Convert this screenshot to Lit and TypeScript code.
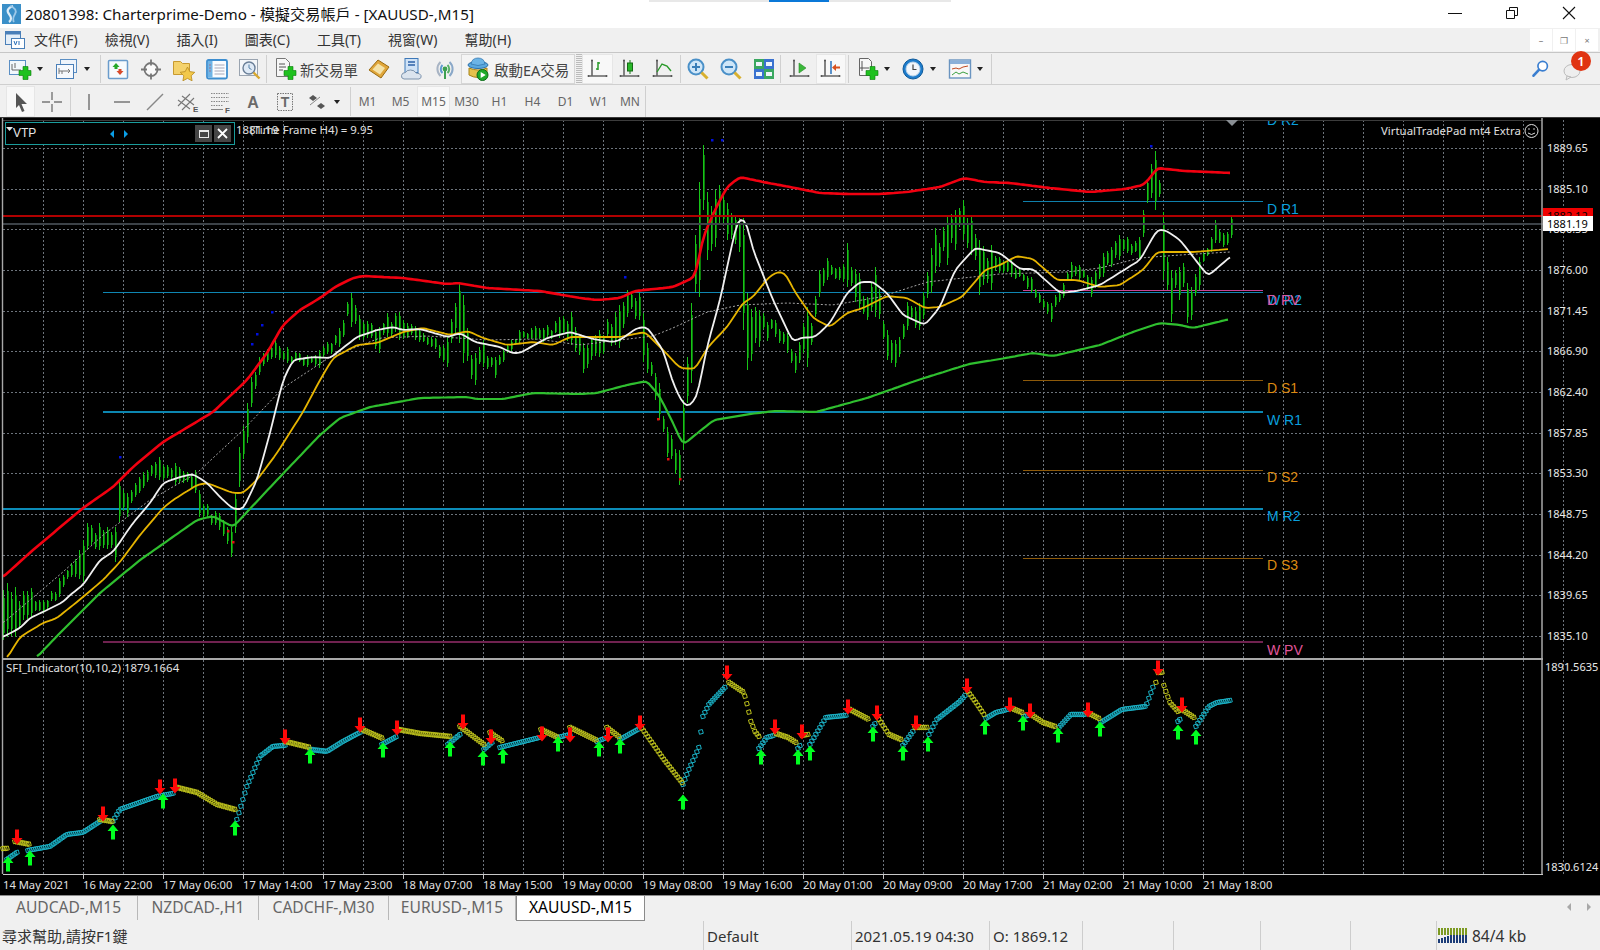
import { LitElement, html, css, svg } from "lit";
import { customElement } from "lit/decorators.js";

type P = [number, number];
type E = [number, number, number];

const RED: P[] = [[3,577],[33,550],[83,508],[113,487],[133,467],[163,442],[213,412],[247,380],[267,353],[283,325],[300,310],[320,298],[335,287],[353,278],[363,276],[403,278],[447,284],[458,283],[487,288],[540,291],[580,298],[597,300],[620,298],[635,291],[673,287],[695,277],[700,253],[703,237],[715,210],[727,187],[740,177],[763,182],[790,187],[820,193],[847,194],[880,194],[907,192],[940,187],[964,178],[985,182],[1010,183],[1050,188],[1090,192],[1125,189],[1143,185],[1150,178],[1157,168],[1185,171],[1232,173]];
const WHITE: P[] = [[3,637],[20,628],[30,618],[43,612],[63,602],[70,595],[83,585],[100,560],[113,552],[133,523],[150,503],[163,483],[180,477],[193,474],[207,483],[220,497],[233,509],[243,509],[257,480],[270,433],[283,380],[293,360],[313,357],[330,358],[357,337],[377,330],[393,327],[403,330],[420,329],[448,337],[460,333],[475,342],[500,347],[512,353],[520,353],[547,338],[570,332],[593,339],[613,342],[620,340],[637,328],[647,327],[663,350],[673,383],[682,402],[688,407],[697,397],[707,347],[720,300],[733,240],[738,220],[746,220],[752,247],[773,300],[793,342],[800,338],[815,337],[830,323],[847,293],[860,282],[873,282],[887,293],[903,315],[925,325],[940,307],[955,270],[975,248],[985,250],[1000,253],[1020,269],[1033,269],[1060,293],[1077,291],[1100,285],[1140,260],[1157,230],[1165,230],[1180,240],[1208,276],[1230,257]];
const YELLOW: P[] = [[7,658],[20,637],[43,623],[57,618],[83,597],[103,580],[120,562],[140,535],[163,508],[173,500],[197,485],[207,483],[220,488],[233,493],[243,493],[257,480],[277,453],[303,412],[320,380],[333,358],[357,345],[377,343],[403,332],[423,328],[450,335],[468,331],[483,338],[507,345],[533,342],[553,345],[570,337],[620,337],[645,332],[663,350],[680,368],[695,369],[708,347],[727,327],[743,303],[753,297],[768,278],[777,272],[785,273],[795,292],[813,318],[830,327],[847,313],[863,308],[887,296],[907,298],[925,308],[940,307],[962,297],[985,270],[1000,265],[1017,256],[1033,259],[1057,280],[1077,280],[1100,287],[1120,285],[1143,270],[1157,252],[1193,252],[1230,249]];
const GREEN: P[] = [[37,657],[60,633],[100,593],[140,560],[197,520],[213,516],[233,527],[277,480],[320,435],[340,418],[370,407],[420,398],[467,397],[477,399],[503,399],[533,393],[580,394],[597,393],[627,385],[647,381],[660,397],[673,423],[683,445],[700,431],[714,420],[750,414],[775,411],[816,412],[867,398],[918,380],[969,364],[1000,359],[1033,353],[1053,356],[1100,345],[1133,332],[1160,323],[1180,325],[1193,328],[1230,319]];
const SMA: P[] = [[3,623],[63,572],[103,535],[150,500],[197,473],[243,430],[283,388],[330,357],[380,338],[427,336],[487,340],[537,339],[580,345],[620,340],[653,336],[673,328],[707,312],[740,305],[787,303],[833,305],[880,297],[927,282],[1000,274],[1067,272],[1100,268],[1140,258],[1180,255],[1230,252]];

const ENV: E[] = [[3,590,640],[7,583,637],[13,587,637],[30,588,617],[43,600,613],[60,578,597],[70,563,577],[82,540,582],[87,523,550],[100,523,550],[113,527,562],[117,480,522],[127,493,517],[137,477,493],[157,457,480],[173,463,485],[193,470,493],[200,490,517],[217,513,530],[232,527,557],[235,493,533],[240,447,487],[245,403,443],[250,377,407],[260,357,375],[273,340,358],[287,347,363],[307,355,367],[320,350,368],[337,328,347],[350,293,327],[360,315,340],[378,327,353],[387,313,337],[400,312,340],[430,337,347],[447,337,367],[458,282,343],[463,295,363],[473,353,385],[483,340,367],[493,357,378],[502,350,362],[517,330,343],[533,326,340],[543,328,342],[560,317,338],[572,312,345],[583,343,373],[597,330,357],[620,305,348],[625,290,317],[637,293,320],[642,313,362],[648,343,373],[653,373,400],[658,383,420],[667,427,457],[680,450,485],[683,400,450],[687,357,403],[690,303,383],[698,182,297],[701,145,210],[707,192,260],[713,190,247],[720,185,223],[728,203,240],[737,218,252],[743,218,330],[747,293,370],[760,310,347],[773,320,337],[787,333,353],[793,353,373],[807,307,367],[820,270,297],[828,258,280],[840,267,280],[848,243,287],[857,273,310],[867,297,320],[875,267,317],[887,330,360],[893,340,367],[900,337,357],[907,302,330],[920,303,330],[930,248,293],[933,228,273],[937,243,267],[945,215,265],[955,210,250],[962,200,240],[970,215,255],[978,240,295],[990,245,290],[1000,257,273],[1010,260,277],[1030,277,293],[1037,293,303],[1050,303,322],[1055,295,307],[1062,283,298],[1070,262,280],[1080,265,280],[1090,277,297],[1103,253,277],[1117,235,260],[1127,237,253],[1137,237,260],[1143,210,237],[1146,180,203],[1153,151,210],[1157,180,197],[1161,212,280],[1165,257,290],[1170,270,322],[1177,267,300],[1182,263,287],[1185,283,323],[1192,287,320],[1197,257,290],[1203,253,262],[1210,237,252],[1215,220,243],[1222,233,247],[1225,232,245],[1231,216,238]];

const SFI: ["t" | "y", P[]][] = [
  ["y",[[3,849],[8,849]]],["t",[[7,860],[17,853]]],["y",[[15,842],[30,845]]],
  ["t",[[28,851],[50,847],[67,835],[83,833],[100,822]]],["y",[[100,820],[112,822]]],
  ["t",[[113,822],[120,810],[157,797],[173,794]]],["y",[[177,788],[197,793],[217,805],[235,810]]],
  ["t",[[237,820],[247,787],[260,757],[273,747],[285,746]]],["y",[[285,742],[310,748]]],
  ["t",[[310,750],[327,752],[343,742],[360,733]]],["y",[[362,730],[383,739]]],
  ["t",[[382,745],[397,737]]],["y",[[398,730],[420,734],[450,737]]],
  ["t",[[448,745],[460,735]]],["y",[[460,727],[484,745]]],["t",[[484,750],[492,743]]],
  ["y",[[490,733],[503,742]]],["t",[[500,748],[540,738]]],["y",[[541,730],[558,738]]],
  ["t",[[558,738],[570,735]]],["y",[[570,728],[597,741]]],["t",[[597,742],[607,738]]],
  ["y",[[607,728],[620,738]]],["t",[[620,740],[638,730]]],
  ["y",[[640,726],[664,760],[682,783]]],
  ["t",[[683,785],[689,770],[699,748],[703,717],[709,705],[725,688]]],
  ["y",[[729,683],[744,693],[748,708],[751,722],[755,732],[759,737]]],
  ["t",[[759,749],[767,738],[774,736]]],["y",[[776,734],[788,738],[796,743]]],
  ["t",[[798,749],[801,745]]],["y",[[802,736],[809,735]]],
  ["t",[[810,745],[826,718],[846,716]]],["y",[[850,710],[869,720]]],
  ["t",[[873,727],[876,723]]],["y",[[877,717],[889,735],[901,740]]],
  ["t",[[903,746],[913,732]]],["y",[[915,728],[927,728]]],
  ["t",[[929,735],[937,720],[960,702],[966,695]]],["y",[[968,692],[976,703],[984,715]]],
  ["t",[[986,719],[996,713],[1008,710]]],["y",[[1012,709],[1022,713]]],
  ["t",[[1024,717],[1029,716]]],["y",[[1031,715],[1043,723],[1055,727]]],
  ["t",[[1059,728],[1071,715],[1085,715]]],["y",[[1087,713],[1099,719]]],
  ["t",[[1101,723],[1122,710],[1146,707],[1154,685]]],
  ["y",[[1156,683],[1158,673],[1162,673],[1163,683],[1166,692],[1170,703],[1178,712],[1182,710],[1194,718]]],
  ["t",[[1178,722],[1180,720]]],["t",[[1196,727],[1209,707],[1217,703],[1231,701]]],
];
const UPS: P[] = [[8,864],[30,858],[113,832],[163,801],[235,828],[310,756],[383,750],[450,749],[483,758],[503,756],[558,744],[599,749],[620,746],[683,802],[761,757],[798,757],[810,753],[873,734],[903,753],[928,744],[985,727],[1023,723],[1058,735],[1100,729],[1178,732],[1196,737]];
const DOWNS: P[] = [[17,837],[103,814],[160,787],[175,786],[285,737],[360,725],[397,728],[463,722],[491,737],[542,734],[570,735],[608,735],[640,723],[727,673],[775,727],[802,732],[848,707],[877,713],[916,723],[967,686],[1010,705],[1030,711],[1088,710],[1158,668],[1182,705]];

const PRICES = ["1889.65","1885.10","1880.55","1876.00","1871.45","1866.90","1862.40","1857.85","1853.30","1848.75","1844.20","1839.65","1835.10"];
const TIMES: [number,string][] = [[3,"14 May 2021"],[83,"16 May 22:00"],[163,"17 May 06:00"],[243,"17 May 14:00"],[323,"17 May 23:00"],[403,"18 May 07:00"],[483,"18 May 15:00"],[563,"19 May 00:00"],[643,"19 May 08:00"],[723,"19 May 16:00"],[803,"20 May 01:00"],[883,"20 May 09:00"],[963,"20 May 17:00"],[1043,"21 May 02:00"],[1123,"21 May 10:00"],[1203,"21 May 18:00"]];
const BLUE_DOTS: P[] = [[712,140],[722,140],[120,457],[252,344],[257,334],[262,325],[272,312],[625,277],[1151,146]];
const RED_DOTS: P[] = [[228,531],[233,542],[658,419],[668,459],[680,479]];

const lerp = (pts: P[], x: number) => {
  for (let i = 1; i < pts.length; i++) {
    if (x <= pts[i][0]) {
      const [a, b] = [pts[i - 1], pts[i]];
      return a[1] + ((b[1] - a[1]) * (x - a[0])) / Math.max(b[0] - a[0], 0.001);
    }
  }
  return pts[pts.length - 1][1];
};
const curve = (pts: P[]) => {
  const x0 = pts[0][0], x1 = pts[pts.length - 1][0];
  const out: P[] = [];
  for (let x = x0; x <= x1; x += 3) out.push([x, lerp(pts, x)]);
  return out
    .map((p, i) => {
      const a = out[Math.max(i - 1, 0)], b = out[Math.min(i + 1, out.length - 1)];
      return `${i ? "L" : "M"}${p[0]} ${((a[1] + 2 * p[1] + b[1]) / 4).toFixed(1)}`;
    })
    .join("");
};
const candles = () => {
  let s = 4242;
  const rnd = () => (s = (s * 16807) % 2147483647) / 2147483647;
  const hi: P[] = ENV.map((e) => [e[0], e[1]]);
  const lo: P[] = ENV.map((e) => [e[0], e[2]]);
  const bars = new Map<number, [number, number]>();
  const step = 4;
  for (let x = 3; x <= 1231; x += step) {
    const h = lerp(hi, x), l = lerp(lo, x), span = l - h;
    const len = span * (0.45 + 0.4 * rnd());
    const t = h + (span - len) * rnd();
    bars.set(x, [t, t + len]);
  }
  for (const e of ENV) {
    const x = 3 + Math.min(Math.round((e[0] - 3) / step), 307) * step;
    bars.set(x, [e[1], e[2]]);
  }
  let wick = "", body = "";
  bars.forEach((v, x) => {
    const len = v[1] - v[0];
    wick += `M${x + 0.5} ${v[0].toFixed(0)}V${v[1].toFixed(0)}`;
    body += `M${x + 1.5} ${(v[0] + len * 0.15).toFixed(0)}V${(v[1] - len * 0.15).toFixed(0)}`;
  });
  return { wick, body };
};
const chain = (c: "t" | "y") =>
  SFI.filter((s) => s[0] === c)
    .map((s) => {
      let d = "";
      const x0 = s[1][0][0], x1 = s[1][s[1].length - 1][0];
      for (let x = x0; x <= x1 + 0.1; x += 2) {
        const y = lerp(s[1], x);
        d += `M${(x - 2.5).toFixed(1)} ${(y - 2).toFixed(1)}l3.8 -1l1 3.8l-3.8 1z`;
      }
      return d;
    })
    .join("");
const upArrow = (p: P) => `M${p[0]} ${p[1] - 7.5}l5.5 6.5h-3.500v8.500h-4v-8.500h-3.500z`;
const downArrow = (p: P) => `M${p[0]} ${p[1] + 7.5}l5.5 -6.500h-3.500v-8.500h-4v8.500h-3.500z`;

@customElement("mt-chart")
class MtChart extends LitElement {
  static styles = css`
    :host { display: block; height: 779px; background: #000; }
    svg { display: block; }
    .pr { font: 11px "Noto Sans", sans-serif; fill: #e8e8e8; }
    .tm { font: 11.2px "Noto Sans", sans-serif; fill: #e2e2e2; }
    .ink { font: 11px "Noto Sans", sans-serif; fill: #000; }
    .lv { font: 14px "Liberation Sans", sans-serif; }
    .note { font: 11.4px "Noto Sans", sans-serif; fill: #e0e0e0; }
    .vtp { font: 12px "Liberation Sans", sans-serif; fill: #e8e8e8; }
    .c { fill: none; }
    .cr { shape-rendering: crispEdges; }
  `;
  render() {
    const hg = PRICES.map((_, i) => 148 + 40.67 * i);
    const vg = Array.from({ length: 39 }, (_, i) => 43 + 40 * i);
    const { wick, body } = candles();
    const lines: [number, number, number, string, number][] = [
      [1023, 1263, 201, "#0f80ac", 1],
      [1023, 1263, 380, "#8e5a0a", 1],
      [1023, 1263, 470, "#8e5a0a", 1],
      [1023, 1263, 558, "#8e5a0a", 1],
      [103, 1263, 292, "#0f86b2", 1],
      [1023, 1263, 290, "#c84496", 1],
      [103, 1263, 412, "#0c86b0", 1.4],
      [3, 1263, 509, "#0c8cb8", 2],
      [103, 1263, 642, "#702250", 1.4],
    ];
    const labels: [number, string, string][] = [
      [125, "D R2", "#0a9fdc"], [214, "D R1", "#0a9fdc"], [393, "D S1", "#dc8a12"], [482, "D S2", "#dc8a12"], [570, "D S3", "#dc8a12"],
      [305, "W R2", "#0a9fdc"], [305, "D PV", "#e0559a"], [425, "W R1", "#0a9fdc"], [521, "M R2", "#0a9fdc"], [655, "W PV", "#e0559a"],
    ];
    return html`<svg width="1600" height="779" viewBox="0 117 1600 779">
      <rect x="0" y="117" width="1600" height="779" fill="#000"></rect>
      <g class="cr" stroke="#6d747c" stroke-dasharray="2 2" fill="none">
        ${hg.map((y) => svg`<path d="M3 ${Math.round(y) + 0.5}H1542"></path>`)}
        ${vg.map((x) => svg`<path d="M${x + 0.5} 120V658M${x + 0.5} 660V874"></path>`)}
      </g>
      ${lines.map((l) => svg`<path class="cr" d="M${l[0]} ${l[2]}H${l[1]}" stroke=${l[3]} stroke-width=${l[4]}></path>`)}
      <path class="cr c" d=${body} stroke="#0a7e0a"></path>
      <path class="cr c" d=${wick} stroke="#18c418"></path>
      <path class="c" d=${curve(SMA)} stroke="#a6a6a6" stroke-dasharray="2 2"></path>
      <path class="c" d=${curve(GREEN)} stroke="#2fbf2f" stroke-width="2.2" stroke-linejoin="round"></path>
      <path class="c" d=${curve(YELLOW)} stroke="#e6b400" stroke-width="1.8" stroke-linejoin="round"></path>
      <path class="c" d=${curve(WHITE)} stroke="#f0f0f0" stroke-width="1.8" stroke-linejoin="round"></path>
      <path class="c" d=${curve(RED)} stroke="#f20010" stroke-width="2.6" stroke-linejoin="round"></path>
      <path class="cr" d="M3 216H1543" stroke="#b00000" stroke-width="2"></path>
      <path class="cr" d="M3 224H1543" stroke="#3c4248" stroke-width="2"></path>
      ${BLUE_DOTS.map((p) => svg`<rect x=${p[0] - 1} y=${p[1] - 1} width="2.5" height="2.5" fill="#0010e0"></rect>`)}
      ${RED_DOTS.map((p) => svg`<rect x=${p[0] - 1} y=${p[1] - 1} width="2.5" height="2.5" fill="#e01010"></rect>`)}
      ${labels.map((l) => svg`<text class="lv" x="1267" y=${l[0]} fill=${l[2]}>${l[1]}</text>`)}

      <rect x="0" y="117" width="1600" height="3" fill="#000"></rect>
      <path d="M0 117.5H1600" stroke="#3a3a3a"></path>
      <path d="M3 120.5H1542" stroke="#3c3c3c"></path>
      <path d="M1226 120h12l-6 6z" fill="#8a8f94"></path>

      <path d="M2.5 118V874" stroke="#a8a8a8" stroke-width="1.4"></path>
      <path d="M3 659H1543" stroke="#a8a8a8" stroke-width="2"></path>
      <path d="M1542 118V875" stroke="#a8a8a8" stroke-width="1.5"></path>
      <path d="M3 874.5H1543" stroke="#c8c8c8"></path>
      ${TIMES.slice(1).map((t) => svg`<path d="M${t[0] + 0.5} 874V879" stroke="#c8c8c8"></path>`)}
      ${TIMES.map((t) => svg`<text class="tm" x=${t[0]} y="889">${t[1]}</text>`)}
      <path d="M0 895.5H1600" stroke="#8c8c8c"></path>

      <path class="c" d=${chain("t")} stroke="#1ab0c4"></path>
      <path class="c" d=${chain("y")} stroke="#bcc01c"></path>
      <path d=${UPS.map(upArrow).join("")} fill="#00ff20"></path>
      <path d=${DOWNS.map(downArrow).join("")} fill="#ff0808"></path>
      <text class="note" x="6" y="672">SFI_Indicator(10,10,2) 1879.1664</text>

      ${PRICES.map((p, i) => svg`<text class="pr" x="1547" y=${hg[i] + 4}>${p}</text>`)}
      <rect x="1543" y="208" width="50" height="16" fill="#f00000"></rect>
      <text class="ink" x="1547" y="220">1882.12</text>
      <rect x="1543" y="216" width="50" height="15" fill="#fff"></rect>
      <text class="ink" x="1547" y="228">1881.19</text>
      <text class="pr" x="1545" y="671">1891.5635</text>
      <text class="pr" x="1545" y="871">1830.6124</text>

      <rect x="5.5" y="122.5" width="229" height="22" fill="#000" stroke="#1a9c9c"></rect>
      <path d="M6 127h7l-3.500 4z" fill="#e8e8e8"></path>
      <text class="vtp" x="13" y="137">VTP</text>
      <path d="M114 130v8l-4-4zM124 130v8l4-4z" fill="#0a9fe8"></path>
      <rect x="195" y="125" width="17" height="17" fill="#454545"></rect>
      <rect x="214" y="125" width="17" height="17" fill="#454545"></rect>
      <rect x="199.500" y="130.500" width="9" height="7" fill="none" stroke="#e8e8e8"></rect>
      <path d="M199.500 131.500h9" stroke="#e8e8e8"></path>
      <path d="M218 129l9 9M227 129l-9 9" stroke="#fff" stroke-width="1.800"></path>
      <text class="note" x="236" y="134">1881.19</text>
      <text class="note" x="250" y="134">(Time Frame H4) = 9.95</text>
      <text class="note" x="1381" y="135">VirtualTradePad mt4 Extra</text>
      <circle cx="1531.500" cy="131" r="6.500" fill="none" stroke="#e0e0e0"></circle>
      <path d="M1528 133q3.500 3 7 0" fill="none" stroke="#e0e0e0"></path>
      <circle cx="1529" cy="129" r=".8" fill="#e0e0e0"></circle>
      <circle cx="1534" cy="129" r=".8" fill="#e0e0e0"></circle>
    </svg>`;
  }
}

const axes = svg`<path d="M6 3v16M2 19h19" stroke="#666" stroke-width="1.600" fill="none"></path><circle cx="2.500" cy="19" r="1" fill="#555"></circle><circle cx="20.500" cy="19" r="1" fill="#555"></circle><circle cx="6" cy="3.500" r="1" fill="#555"></circle>`;
const greenPlus = svg`<path d="M12 12.500h4v-4h5v4h3v5h-3v4h-5v-4h-4z" transform="translate(-1 1)" fill="#1fc11f" stroke="#0a7a0a" stroke-width=".6"></path>`;

const icons: Record<string, unknown> = {
  newChart: svg`<rect x="1.500" y="3.500" width="16" height="14" fill="#f2f7fc" stroke="#5b8fc4"></rect><path d="M4 7v6M4 13h9M7 6v5" stroke="#666" fill="none"></path>${greenPlus}`,
  profile: svg`<rect x="5.500" y="2.500" width="16" height="13" fill="#eef4fb" stroke="#5b8fc4"></rect><rect x="1.500" y="7.500" width="17" height="14" fill="#f6f9fd" stroke="#4a7fb8"></rect><path d="M4 11v6M4 14h11M7 17v-3M13 12l2 2-2 2" stroke="#777" fill="none"></path>`,
  market: svg`<rect x="2.500" y="3.500" width="19" height="18" rx="1" fill="#f7fafd" stroke="#6a9ccc" stroke-width="1.500"></rect><path d="M10 6l3.500 4h-2v2h-3v-2h-2z" fill="#28a828"></path><path d="M14 18l-3.500-4h2v-2h3v2h2z" fill="#d84a2a"></path>`,
  crosshair: svg`<circle cx="12" cy="12.500" r="6.500" fill="#fafafa" stroke="#777" stroke-width="1.800"></circle><path d="M12 2.500v6M12 16.500v6M2 12.500h6M16 12.500h6" stroke="#777" stroke-width="1.800"></path>`,
  folder: svg`<path d="M1.500 4.500h7l2 2h7v11h-16z" fill="#f4d26c" stroke="#c89a30"></path><path d="M15.500 10l2.300 4.600 5 .7-3.600 3.500.9 5-4.600-2.400-4.600 2.400.9-5-3.600-3.500 5-.7z" fill="#f2c84a" stroke="#b88a20" stroke-width=".8"></path>`,
  terminal: svg`<rect x="2" y="3" width="20" height="18.500" rx="1.500" fill="#fafcff" stroke="#3d8ed0" stroke-width="1.800"></rect><rect x="3" y="4" width="4.500" height="16.500" fill="#6fb4e6"></rect><path d="M9.500 8h10M9.500 11h10M9.500 14h10M9.500 17h10" stroke="#a8a8b8"></path><path d="M5 7.500v1M5 10.500v1M5 13.500v1" stroke="#d03030"></path>`,
  tester: svg`<rect x="1.500" y="2.500" width="18" height="16" fill="#f4f6f9" stroke="#9aa4b0"></rect><circle cx="11" cy="11" r="6" fill="#dfeaf6" stroke="#6a7f98" stroke-width="1.400"></circle><path d="M11 7.500V11l2.500 1.500" stroke="#5580a8" fill="none"></path><path d="M15.500 15.500l6 6" stroke="#d8a830" stroke-width="2.400"></path>`,
  order: svg`<path d="M3.500 1.500h9l4 4v14h-13z" fill="#f7f7f7" stroke="#777"></path><path d="M6 7h6M6 10h7M6 13h4" stroke="#555"></path>${greenPlus}`,
  gold: svg`<path d="M2 13l9-10 11 7-8 11z" fill="#e0a63a" stroke="#9a6a10"></path><path d="M5.500 12.500l5.500-6 7 4.500-5 6.500z" fill="#f4e2a8"></path>`,
  editor: svg`<rect x="5" y="1.500" width="13" height="14" fill="#cfe2f6" stroke="#3d78b8"></rect><path d="M8 5h7M8 8h7" stroke="#2c62a8" stroke-width="1.400"></path><path d="M4 22q-3-.5-2.500-3.500t4-3q1-2.500 5-2.500t5.500 3q4 0 5 2.500t-2 3.500z" fill="#dbe4ee" stroke="#7d93ac"></path>`,
  signal: svg`<path d="M7.500 19a9.500 9.500 0 0 1 0-14" fill="none" stroke="#a8b4c4" stroke-width="2"></path><path d="M16.500 5a9.500 9.500 0 0 1 0 14" fill="none" stroke="#8aa8c8" stroke-width="2"></path><path d="M9.500 16a5.500 5.500 0 0 1 0-8" fill="none" stroke="#5e9ad0" stroke-width="2"></path><path d="M14.500 8a5.500 5.500 0 0 1 0 8" fill="none" stroke="#58b068" stroke-width="2"></path><circle cx="12" cy="12" r="2.400" fill="#3da050"></circle><path d="M12 14v8" stroke="#3da050" stroke-width="2"></path>`,
  ea: svg`<ellipse cx="12" cy="8" rx="10" ry="3.500" fill="#5aa8de" stroke="#2a70aa"></ellipse><path d="M5 7q1-6 7-6t7 6q-7 3-14 0z" fill="#6cb4e6" stroke="#2a70aa" stroke-width=".7"></path><path d="M3 11q9 4 18 0v7q-9 5-18 0z" fill="#e6c24c" stroke="#a88418"></path><circle cx="16.500" cy="18" r="5.500" fill="#1eaa2a" stroke="#0d6a18"></circle><path d="M14.700 15l5 3-5 3z" fill="#fff"></path>`,
  bars: svg`${axes}<path d="M12 5v8M10 12h2M12 6h2" stroke="#2a9a2a" stroke-width="1.500" fill="none"></path>`,
  candle: svg`${axes}<path d="M12 3v14" stroke="#1a7a1a"></path><rect x="9.500" y="6" width="5" height="8" fill="#2ab82a" stroke="#156a15"></rect>`,
  line: svg`${axes}<path d="M6 15l5-8 5 2 4 5" stroke="#2a9a2a" stroke-width="1.400" fill="none"></path>`,
  zoomIn: svg`<circle cx="10" cy="10" r="7.500" fill="#cfe6f8" stroke="#4a90c8" stroke-width="2"></circle><path d="M6 10h8M10 6v8" stroke="#3a7eb8" stroke-width="2"></path><path d="M15.500 15.500l6 6" stroke="#d8b030" stroke-width="3"></path>`,
  zoomOut: svg`<circle cx="10" cy="10" r="7.500" fill="#cfe6f8" stroke="#4a90c8" stroke-width="2"></circle><path d="M6 10h8" stroke="#3a7eb8" stroke-width="2"></path><path d="M15.500 15.500l6 6" stroke="#d8b030" stroke-width="3"></path>`,
  tile: svg`<rect x="2" y="2" width="10" height="10" fill="#3aa860"></rect><rect x="12" y="2" width="10" height="10" fill="#3a72d0"></rect><rect x="2" y="12" width="10" height="10" fill="#3a72d0"></rect><rect x="12" y="12" width="10" height="10" fill="#3aa860"></rect><path d="M4 5h6v4H4zM14 5h6v4h-6zM4 15h6v4H4zM14 15h6v4h-6z" fill="#eef5fb"></path>`,
  scroll: svg`${axes}<path d="M11 6l7 5-7 5z" fill="#3ab83a" stroke="#2a8a2a" stroke-width=".6"></path>`,
  shift: svg`${axes}<path d="M12 4v13" stroke="#4a86c4" stroke-width="1.800"></path><path d="M21 9.500h-4v-2.500l-4 3.500 4 3.500v-2.500h4z" fill="#d8501c"></path>`,
  indic: svg`<path d="M4.500 1.500h9l3 3v14h-12z" fill="#f7f7f7" stroke="#666"></path><path d="M7 4v10M5 11h9" stroke="#555" fill="none"></path>${greenPlus}`,
  clock: svg`<circle cx="12" cy="12" r="10" fill="#1d7ccc" stroke="#0f5a9a"></circle><circle cx="12" cy="12" r="7" fill="#f2f6fb" stroke="#bcd4ea"></circle><path d="M12 7.500V12.500h3.500" stroke="#444" stroke-width="1.200" fill="none"></path>`,
  tmpl: svg`<rect x="1.500" y="3" width="21" height="18" fill="#f8f8f8" stroke="#6a94c0" stroke-width="1.400"></rect><rect x="2" y="3.500" width="20" height="3.500" fill="#8ab0d8"></rect><path d="M4 12l4-1 3 1 4-2 5-1" stroke="#c04a20" fill="none"></path><path d="M4 18l4-3 3 2 4-2 5 2" stroke="#3aa040" fill="none"></path>`,
  cursor: svg`<path d="M7 3l11 11h-5.500l3 7-2.500 1-3-7-3 3z" fill="#555"></path>`,
  cross: svg`<path d="M12 2v8M12 14v8M2 12h8M14 12h8" stroke="#777" stroke-width="1.400"></path>`,
  vline: svg`<path d="M12 4v16" stroke="#777" stroke-width="1.500"></path>`,
  hline: svg`<path d="M4 12h16" stroke="#777" stroke-width="1.500"></path>`,
  trend: svg`<path d="M4 20L20 4" stroke="#888" stroke-width="1.500"></path>`,
  chan: svg`<path d="M2 16L14 4M6 20L18 8M2 10l12 9M6 6l12 9" stroke="#777" stroke-width="1.100" fill="none"></path><text x="17" y="22" font-family="Liberation Sans" font-size="8" font-weight="700" fill="#555">E</text>`,
  fib: svg`<path d="M2 3.500h18M2 7.500h18M2 11.500h18M2 15.500h12" stroke="#888" stroke-dasharray="1.500 1"></path><path d="M2 19.500h12" stroke="#888"></path><text x="16" y="23" font-family="Liberation Sans" font-size="8" font-weight="700" fill="#555">F</text>`,
  textA: svg`<text x="12" y="18" text-anchor="middle" font-family="Liberation Sans" font-size="16" font-weight="700" fill="#6a6a6a">A</text>`,
  textT: svg`<rect x="4.500" y="3.500" width="15" height="17" fill="none" stroke="#777" stroke-dasharray="1.500 1"></rect><text x="12" y="17" text-anchor="middle" font-family="Liberation Sans" font-size="14" font-weight="700" fill="#6a6a6a">T</text>`,
  arrows: svg`<path d="M8 5l4 3-4 3-4-3z" fill="#555"></path><path d="M16 13l4 3-4 3-4-3z" fill="#555"></path><path d="M5 15l10-8" stroke="#888"></path>`,
  search: svg`<circle cx="14" cy="8.500" r="5.700" fill="#fff" stroke="#3a7ed0" stroke-width="2"></circle><path d="M9.500 13l-6.500 7" stroke="#3a7ed0" stroke-width="3.200" stroke-linecap="round"></path>`,
};
const ic = (n: string) => html`<svg class="ic" viewBox="0 0 24 24">${icons[n]}</svg>`;

type Item =
  | { w: number }
  | { sep: true }
  | { b: string; w?: number; on?: boolean }
  | { dd: string }
  | { tf: string; w?: number; on?: boolean };

const TB1: Item[] = [
  { w: 5 }, { dd: "newChart" }, { w: 7 }, { dd: "profile" }, { w: 8 }, { sep: true },
  { b: "market" }, { b: "crosshair" }, { b: "folder" }, { b: "terminal" }, { b: "tester" }, { sep: true },
];
const TB1B: Item[] = [{ b: "gold" }, { b: "editor" }, { b: "signal" }];
const TB1C: Item[] = [
  { b: "bars", w: 31, on: true }, { b: "candle" }, { b: "line" }, { w: 1 }, { sep: true },
  { b: "zoomIn" }, { b: "zoomOut" }, { b: "tile" }, { sep: true }, { w: 2 }, { b: "scroll" }, { b: "shift", w: 30, on: true },
  { w: 2 }, { sep: true }, { w: 3 }, { dd: "indic" }, { w: 6 }, { dd: "clock" }, { w: 7 }, { dd: "tmpl" },
];
const TB2: Item[] = [
  { w: 6 }, { b: "cursor", w: 29, on: true }, { b: "cross" }, { w: 2 }, { sep: true }, { w: 1 },
  { b: "vline" }, { b: "hline" }, { b: "trend" }, { b: "chan" }, { b: "fib" }, { b: "textA", w: 31 }, { b: "textT" }, { w: 1 },
  { dd: "arrows" }, { w: 8 }, { sep: true },
  { tf: "M1" }, { tf: "M5" }, { tf: "M15", on: true }, { tf: "M30" }, { tf: "H1" }, { tf: "H4" }, { tf: "D1" }, { tf: "W1" }, { tf: "MN", w: 30 },
];
const MENU = ["文件(F)", "檢視(V)", "插入(I)", "圖表(C)", "工具(T)", "視窗(W)", "幫助(H)"];
const TABS: [string, number][] = [["AUDCAD-,M15", 138], ["NZDCAD-,H1", 121], ["CADCHF-,M30", 130], ["EURUSD-,M15", 127]];
const STATUS: [string, number][] = [["Default", 148], ["2021.05.19 04:30", 138], ["O: 1869.12", 93], ["", 91], ["", 87], ["", 90], ["", 86]];

@customElement("app-root")
export class AppRoot extends LitElement {
  static styles = css`
    :host {
      display: block; position: relative; width: 1600px; height: 950px; overflow: hidden;
      font-family: "Noto Sans", "Noto Sans CJK TC", sans-serif; color: #222; background: #f0f0f0;
    }
    .ic { width: 24px; height: 24px; display: block; flex: none; }
    .title { height: 28px; box-sizing: border-box; padding-bottom: 3px; background: #fff; display: flex; align-items: center; position: relative; font-size: 15.2px; color: #111; white-space: nowrap; }
    .logo { width: 19px; height: 20px; margin: 3px 4px 0 2px; display: block; }
    .strip { position: absolute; left: 649px; top: 0; width: 302px; height: 1.5px; background: #e8e8e8; }
    .strip i { position: absolute; left: 120px; width: 60px; height: 1.5px; background: #0a78d8; }
    .win { margin-left: auto; display: flex; padding-right: 24px; gap: 43px; align-items: center; }
    .win svg { width: 14px; height: 14px; display: block; }
    .menu { height: 24px; box-sizing: border-box; padding-bottom: 2px; display: flex; align-items: center; font-size: 14px; color: #333; }
    .mico { width: 22px; height: 22px; margin: 2px 8px 0 4px; display: block; flex: none; }
    .mitems { display: flex; gap: 27px; }
    .mdi { margin-left: auto; display: flex; gap: 1px; padding-right: 2px; margin-top: 2px; }
    .mdi span { width: 22px; height: 22px; background: #fff; display: flex; align-items: center; justify-content: center; font-size: 9px; color: #777; }
    .row { display: flex; align-items: center; box-sizing: border-box; }
    .r1 { height: 33px; border-top: 1px solid #c6c6c6; border-bottom: 1px solid #cfcfcf; padding-top: 1px; }
    .r2 { height: 32px; padding-top: 1px; }
    .grp { display: flex; align-items: stretch; height: 100%; flex: none; }
    .g1 { width: 992px; border-right: 1px solid #cfcfcf; box-sizing: border-box; }
    .g2 { width: 646px; border-right: 1px solid #cfcfcf; box-sizing: border-box; }
    .sp { display: block; flex: none; }
    .sep { width: 1px; flex: none; background: #d0d0d0; margin: 1px 0; }
    .b { display: flex; align-items: center; justify-content: center; flex: none; box-sizing: border-box; }
    .on { background: #f8f8f8; box-shadow: inset 0 0 0 1px #e6e6e6; }
    .dd { display: flex; align-items: center; flex: none; }
    .dd .slot { width: 30px; display: flex; justify-content: center; }
    .dd .car { width: 10px; display: flex; justify-content: center; }
    .car i { display: block; border-left: 3.5px solid transparent; border-right: 3.5px solid transparent; border-top: 4px solid #222; }
    .wide { width: 95px; display: flex; align-items: center; padding-left: 6px; box-sizing: border-box; gap: 3px; font-size: 14.5px; color: #444; flex: none; }
    .box { width: 114px; display: flex; align-items: center; padding-left: 4px; gap: 4px; box-sizing: border-box; font-size: 14.5px; color: #444; flex: none; border: 1px solid #d6d6d6; background: #f4f4f4; white-space: nowrap; }
    .grip { width: 6px; flex: none; margin-left: 1px; background: repeating-linear-gradient(180deg, #bbb 0 1px, transparent 1px 2px); }
    .tf { font-size: 12px; color: #666; display: flex; align-items: center; justify-content: center; flex: none; }
    .right { margin-left: auto; display: flex; align-items: center; padding-right: 15px; gap: 12px; position: relative; }
    .right .ic { width: 20px; height: 20px; }
    .bub { width: 22px; height: 18px; position: relative; margin-top: 6px; }
    .bub svg { display: block; width: 22px; height: 18px; }
    .badge { position: absolute; right: -6px; top: -12px; width: 20px; height: 20px; border-radius: 50%; background: #e03412; color: #fff; font-size: 13px; font-weight: 600; display: flex; align-items: center; justify-content: center; }
    .tabs { height: 25px; display: flex; font-size: 15.6px; color: #666; box-sizing: border-box; }
    .tab { display: flex; align-items: center; justify-content: center; box-sizing: border-box; border-right: 1px solid #b8b8b8; height: 24px; padding-bottom: 3px; flex: none; }
    .tab.cur { background: #fff; color: #000; border: 1px solid #8a8a8a; border-top: none; width: 129px; height: 25px; }
    .tarr { margin-left: auto; display: flex; gap: 16px; align-items: center; padding-right: 9px; padding-bottom: 4px; }
    .tarr i { display: block; width: 0; height: 0; border-top: 4px solid transparent; border-bottom: 4px solid transparent; }
    .tarr .l { border-right: 4px solid #a8a8a8; }
    .tarr .r { border-left: 4px solid #a8a8a8; }
    .status { height: 29px; display: flex; font-size: 15px; color: #333; }
    .cell { box-sizing: border-box; border-left: 1px solid #cdcdcd; padding-left: 3px; display: flex; align-items: center; flex: none; white-space: nowrap; }
    .first { width: 703px; border-left: none; padding-left: 2px; }
    .net { padding-left: 1px; gap: 4px; width: 164px; font-size: 15.5px; }
    .net svg { display: block; width: 30px; height: 17px; }
  `;

  private item(it: Item) {
    if ("sep" in it) return html`<span class="sep"></span>`;
    if ("dd" in it)
      return html`<span class="dd"><span class="slot">${ic(it.dd)}</span><span class="car"><i></i></span></span>`;
    if ("b" in it)
      return html`<span class="b ${it.on ? "on" : ""}" style="width:${it.w ?? 33}px">${ic(it.b)}</span>`;
    if ("tf" in it)
      return html`<span class="tf ${it.on ? "on" : ""}" style="width:${it.w ?? 33}px">${it.tf}</span>`;
    return html`<span class="sp" style="width:${it.w}px"></span>`;
  }

  render() {
    return html`
      <div class="title">
        <svg class="logo" viewBox="0 0 19 20"><rect width="19" height="20" fill="#3a8fc8"></rect><path d="M11 2Q3 5 7 10t0 8" fill="none" stroke="#dcecf8" stroke-width="2.200"></path><path d="M8 2q8 3 5 8t-1 8" fill="none" stroke="#9cc8e8" stroke-width="1.800"></path></svg>
        20801398: Charterprime-Demo - 模擬交易帳戶 - [XAUUSD-,M15]
        <span class="strip"><i></i></span>
        <span class="win">
          <svg viewBox="0 0 14 14"><path d="M0 7.500h14" stroke="#111"></path></svg>
          <svg viewBox="0 0 14 14"><path d="M1.500 4.500h8v8h-8zM4.500 4V1.500h8v8H10" fill="none" stroke="#111"></path></svg>
          <svg viewBox="0 0 14 14"><path d="M1 1l12 12M13 1L1 13" stroke="#111" stroke-width="1.100"></path></svg>
        </span>
      </div>
      <div class="menu">
        <svg class="mico" viewBox="0 0 22 22"><rect x="1.500" y="2.500" width="15" height="13" fill="#e4eef8" stroke="#4a7fb8"></rect><rect x="1.500" y="2.500" width="15" height="3" fill="#4a7fb8"></rect><rect x="7.500" y="9.500" width="13" height="10" fill="#fff" stroke="#4a7fb8"></rect><path d="M10 12l1.500 4 1.500-4M15 12v4" stroke="#2a6fb8" fill="none"></path></svg>
        <span class="mitems">${MENU.map((m) => html`<span>${m}</span>`)}</span>
        <span class="mdi"><span>–</span><span>❐</span><span>×</span></span>
      </div>
      <div class="row r1">
        <div class="grp g1">
          ${TB1.map((i) => this.item(i))}
          <span class="wide">${ic("order")}新交易單</span>
          ${TB1B.map((i) => this.item(i))}
          <span class="box">${ic("ea")}啟動EA交易</span>
          <span class="grip"></span>
          ${TB1C.map((i) => this.item(i))}
        </div>
        <div class="right">
          ${ic("search")}
          <span class="bub">
            <svg viewBox="0 0 22 18"><ellipse cx="9" cy="8" rx="8" ry="6.500" fill="#eee" stroke="#bbb"></ellipse><path d="M4 13l-1 4 5-3z" fill="#eee" stroke="#bbb"></path></svg>
            <span class="badge">1</span>
          </span>
        </div>
      </div>
      <div class="row r2">
        <div class="grp g2">${TB2.map((i) => this.item(i))}</div>
      </div>
      <mt-chart></mt-chart>
      <div class="tabs">
        ${TABS.map((t) => html`<span class="tab" style="width:${t[1]}px">${t[0]}</span>`)}
        <span class="tab cur">XAUUSD-,M15</span>
        <span class="tarr"><i class="l"></i><i class="r"></i></span>
      </div>
      <div class="status">
        <span class="cell first">尋求幫助,請按F1鍵</span>
        ${STATUS.map((s) => html`<span class="cell" style="width:${s[1]}px">${s[0]}</span>`)}
        <span class="cell net">
          <svg viewBox="0 0 30 17">
            ${Array.from({ length: 10 }, (_, i) => svg`<rect x=${i * 3} y=${1} width="2" height="7" fill="#7c9a22"></rect><rect x=${i * 3} y=${8 + (i < 5 ? 4 - i : 0)} width="2" height=${i < 5 ? 4 + i : 8} fill="#1c3c78"></rect>`)}
          </svg>
          84/4 kb
        </span>
      </div>
    `;
  }
}
